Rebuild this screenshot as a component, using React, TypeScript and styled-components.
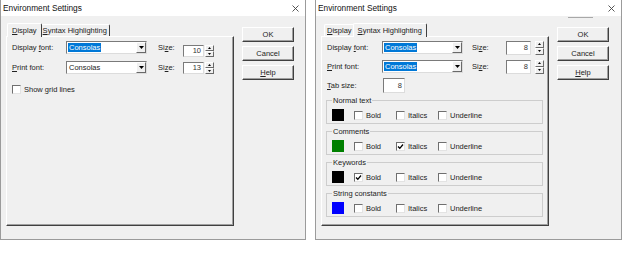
import React from 'react';
import styled, {createGlobalStyle} from 'styled-components';

type SizeLayout = {
    fontLabel: number;
    gap: number;
    sizeLabel: number;
    boxWidth: number;
    boxHeight: number;
    spinGap: number;
};

const LEFT_LAYOUT: SizeLayout = {fontLabel: 54, gap: 11, sizeLabel: 25, boxWidth: 21, boxHeight: 12, spinGap: 1};
const RIGHT_LAYOUT: SizeLayout = {fontLabel: 55, gap: 9, sizeLabel: 34, boxWidth: 25, boxHeight: 14, spinGap: 4};

const styleGroups = [
    {name: 'Normal text', color: '#000000', bold: false, italics: false},
    {name: 'Comments', color: '#008000', bold: false, italics: true},
    {name: 'Keywords', color: '#000000', bold: true, italics: false},
    {name: 'String constants', color: '#0000ff', bold: false, italics: false},
];

const GlobalStyle = createGlobalStyle`
    html, body {
        margin: 0;
        padding: 0;
        background: #fff;
    }
    body {
        font-family: 'Liberation Sans', Arial, sans-serif;
        font-size: 7.5px;
        line-height: 9px;
        color: #222;
    }
    u {
        text-decoration-thickness: 1px;
        text-underline-offset: 1px;
    }
`;

const Desk = styled.div`
    display: flex;
    align-items: flex-start;
    gap: 9px;
    width: 640px;
    height: 254px;
`;

const Frame = styled.div<{$width: number}>`
    display: flex;
    flex-direction: column;
    width: ${(p) => p.$width}px;
    height: 240px;
    box-sizing: border-box;
    border: 1px solid #9b9b9b;
    border-top: none;
    background: #f0f0f0;
`;

const TitleBar = styled.div`
    position: relative;
    display: flex;
    align-items: center;
    justify-content: space-between;
    height: 16px;
    padding-left: 2px;
    background: #fff;
`;

const TitleText = styled.span`
    font-size: 8.3px;
    line-height: 10px;
    color: #111;
`;

const CloseBox = styled.span`
    display: flex;
    align-items: center;
    justify-content: center;
    width: 20px;
    height: 16px;
`;

const TitleSliver = styled.span`
    position: absolute;
    left: 252px;
    bottom: -2px;
    width: 25px;
    height: 1px;
    background: #a8a8a8;
`;

const Body = styled.div`
    display: flex;
    flex: 1;
    padding: 8px 0 0 5px;
`;

const TabArea = styled.div`
    display: flex;
    flex-direction: column;
    width: 228px;
`;

const TabStrip = styled.div`
    position: relative;
    z-index: 1;
    display: flex;
    align-items: flex-end;
    height: 12px;
    padding-left: 3px;
`;

const Tab = styled.div<{$active?: boolean}>`
    position: relative;
    z-index: ${(p) => (p.$active ? 1 : 0)};
    display: flex;
    align-items: center;
    box-sizing: border-box;
    height: ${(p) => (p.$active ? 14 : 12)}px;
    margin: ${(p) => (p.$active ? '0 -2px -1px' : '0')};
    padding: 0 ${(p) => (p.$active ? 4 : 2)}px ${(p) => (p.$active ? 1 : 0)}px;
    border: 1px solid #fff;
    border-bottom: none;
    border-right-color: #404040;
    border-radius: 2px 2px 0 0;
    background: #f0f0f0;
    white-space: nowrap;
`;

const Panel = styled.div`
    display: flex;
    flex-direction: column;
    height: 190px;
    box-sizing: border-box;
    padding: 4px 0 0 5px;
    border: 1px solid;
    border-color: #fff #404040 #404040 #fff;
    box-shadow: inset -1px -1px 0 #a0a0a0;
`;

const ButtonColumn = styled.div`
    display: flex;
    flex-direction: column;
    gap: 4px;
    margin: 3px 0 0 8px;
`;

const PushButton = styled.button`
    width: 52px;
    height: 15px;
    padding: 0;
    box-sizing: border-box;
    font: inherit;
    color: #222;
    background: #f0f0f0;
    border: 1px solid;
    border-color: #fff #404040 #404040 #fff;
    box-shadow: inset -1px -1px 0 #a0a0a0;
`;

const FieldRow = styled.div<{$top: number; $height?: number}>`
    display: flex;
    align-items: center;
    height: ${(p) => p.$height ?? 13}px;
    margin-top: ${(p) => p.$top}px;
`;

const FieldLabel = styled.span<{$width: number; $gap?: number}>`
    flex: none;
    width: ${(p) => p.$width}px;
    margin-left: ${(p) => p.$gap ?? 0}px;
    white-space: nowrap;
`;

const Combo = styled.div`
    display: flex;
    align-items: center;
    width: 81px;
    height: 13px;
    box-sizing: border-box;
    padding-left: 1px;
    border: 1px solid;
    border-color: #7a7a7a #dcdcdc #dcdcdc #7a7a7a;
    background: #fff;
`;

const ComboValue = styled.span<{$selected?: boolean}>`
    padding: 0 1px;
    color: ${(p) => (p.$selected ? '#fff' : '#222')};
    background: ${(p) => (p.$selected ? '#0078d7' : 'transparent')};
`;

const DropButton = styled.span`
    display: flex;
    align-items: center;
    justify-content: center;
    width: 10px;
    height: 11px;
    margin-left: auto;
    box-sizing: border-box;
    border: 1px solid;
    border-color: #fff #696969 #696969 #fff;
    background: #f0f0f0;
`;

const SpinField = styled.span<{$drop: number}>`
    display: flex;
    align-items: center;
    margin-top: ${(p) => p.$drop * 2}px;
`;

const NumberBox = styled.span<{$width: number; $height: number}>`
    display: flex;
    align-items: center;
    justify-content: flex-end;
    width: ${(p) => p.$width}px;
    height: ${(p) => p.$height}px;
    box-sizing: border-box;
    padding-right: 2px;
    border: 1px solid;
    border-color: #7a7a7a #dcdcdc #dcdcdc #7a7a7a;
    background: #fff;
    color: #333;
`;

const Spinner = styled.span<{$gap: number; $height: number}>`
    display: flex;
    flex-direction: column;
    width: 9px;
    height: ${(p) => p.$height}px;
    margin-left: ${(p) => p.$gap}px;
`;

const SpinHalf = styled.span`
    display: flex;
    flex: 1;
    align-items: center;
    justify-content: center;
    box-sizing: border-box;
    border: 1px solid;
    border-color: #fff #696969 #696969 #fff;
    background: #f0f0f0;
`;

const CheckItem = styled.span<{$width?: number}>`
    display: flex;
    flex: none;
    align-items: center;
    gap: 3px;
    width: ${(p) => (p.$width ? `${p.$width}px` : 'auto')};
    white-space: nowrap;
`;

const CheckBox = styled.span`
    display: flex;
    align-items: center;
    justify-content: center;
    width: 9px;
    height: 9px;
    box-sizing: border-box;
    border: 1px solid;
    border-color: #6f6f6f #e3e3e3 #e3e3e3 #6f6f6f;
    background: #fff;
`;

const GroupList = styled.div`
    display: flex;
    flex-direction: column;
    gap: 3px;
    width: 217px;
    margin: 3px 0 0 -1px;
`;

const Group = styled.fieldset`
    margin: 0;
    padding: 4px 5px 2px;
    min-inline-size: 0;
    border: 1px solid #cdcdcd;
`;

const GroupLegend = styled.legend`
    padding: 0 1px;
    line-height: 9px;
`;

const GroupRow = styled.div`
    display: flex;
    align-items: center;
    height: 12px;
`;

const Swatch = styled.span<{$color: string}>`
    flex: none;
    width: 12px;
    height: 12px;
    margin-right: 10px;
    background: ${(p) => p.$color};
`;

const Tick = () => (
    <svg width='7' height='7' viewBox='0 0 7 7'>
        <path d='M1 3.5 L2.8 5.3 L6 1.5' fill='none' stroke='#000' strokeWidth='1.3'/>
    </svg>
);

const Check = ({checked, width, children}: {checked?: boolean; width?: number; children: React.ReactNode}) => (
    <CheckItem $width={width}>
        <CheckBox>{checked && <Tick/>}</CheckBox>
        <span>{children}</span>
    </CheckItem>
);

type FontRowProps = {
    label: React.ReactNode;
    size: string;
    selected?: boolean;
    layout: SizeLayout;
    top: number;
    drop?: number;
};

const FontRow = ({label, size, selected, layout, top, drop = 0}: FontRowProps) => (
    <FieldRow $top={top}>
        <FieldLabel $width={layout.fontLabel}>{label}</FieldLabel>
        <Combo>
            <ComboValue $selected={selected}>Consolas</ComboValue>
            <DropButton>
                <svg width='5' height='3' viewBox='0 0 5 3'>
                    <path d='M0 0 H5 L2.5 3 Z' fill='#000'/>
                </svg>
            </DropButton>
        </Combo>
        <FieldLabel
            $width={layout.sizeLabel}
            $gap={layout.gap}
        >
            {'Si'}<u>{'z'}</u>{'e:'}
        </FieldLabel>
        <SpinField $drop={drop}>
            <NumberBox
                $width={layout.boxWidth}
                $height={layout.boxHeight}
            >
                {size}
            </NumberBox>
            <Spinner
                $gap={layout.spinGap}
                $height={layout.boxHeight}
            >
                <SpinHalf>
                    <svg width='3' height='2' viewBox='0 0 3 2'><path d='M1.5 0 L3 2 H0 Z' fill='#000'/></svg>
                </SpinHalf>
                <SpinHalf>
                    <svg width='3' height='2' viewBox='0 0 3 2'><path d='M0 0 H3 L1.5 2 Z' fill='#000'/></svg>
                </SpinHalf>
            </Spinner>
        </SpinField>
    </FieldRow>
);

type DialogProps = {
    width: number;
    active: 'display' | 'syntax';
    sliver?: boolean;
    children: React.ReactNode;
};

const SettingsDialog = ({width, active, sliver, children}: DialogProps) => (
    <Frame $width={width}>
        <TitleBar>
            <TitleText>{'Environment Settings'}</TitleText>
            <CloseBox>
                <svg width='7' height='7' viewBox='0 0 7 7'>
                    <path d='M0.5 0.5 L6.5 6.5 M6.5 0.5 L0.5 6.5' stroke='#444' strokeWidth='0.9'/>
                </svg>
            </CloseBox>
            {sliver && <TitleSliver/>}
        </TitleBar>
        <Body>
            <TabArea>
                <TabStrip>
                    <Tab $active={active === 'display'}><u>{'D'}</u>{'isplay'}</Tab>
                    <Tab $active={active === 'syntax'}><u>{'S'}</u>{'yntax Highlighting'}</Tab>
                </TabStrip>
                <Panel>{children}</Panel>
            </TabArea>
            <ButtonColumn>
                <PushButton>{'OK'}</PushButton>
                <PushButton>{'Cancel'}</PushButton>
                <PushButton><u>{'H'}</u>{'elp'}</PushButton>
            </ButtonColumn>
        </Body>
    </Frame>
);

const App = () => (
    <>
        <GlobalStyle/>
        <Desk>
            <SettingsDialog
                width={306}
                active='display'
            >
                <FontRow
                    label={<>{'Display '}<u>{'f'}</u>{'ont:'}</>}
                    size='10'
                    selected={true}
                    layout={LEFT_LAYOUT}
                    top={0}
                    drop={3}
                />
                <FontRow
                    label={<><u>{'P'}</u>{'rint font:'}</>}
                    size='13'
                    layout={LEFT_LAYOUT}
                    top={7}
                />
                <FieldRow
                    $top={10}
                    $height={10}
                >
                    <Check>{'Show '}<u>{'g'}</u>{'rid lines'}</Check>
                </FieldRow>
            </SettingsDialog>
            <SettingsDialog
                width={307}
                active='syntax'
                sliver={true}
            >
                <FontRow
                    label={<>{'Display '}<u>{'f'}</u>{'ont:'}</>}
                    size='8'
                    selected={true}
                    layout={RIGHT_LAYOUT}
                    top={0}
                />
                <FontRow
                    label={<><u>{'P'}</u>{'rint font:'}</>}
                    size='8'
                    selected={true}
                    layout={RIGHT_LAYOUT}
                    top={6}
                />
                <FieldRow
                    $top={5}
                    $height={15}
                >
                    <FieldLabel $width={56}><u>{'T'}</u>{'ab size:'}</FieldLabel>
                    <NumberBox
                        $width={22}
                        $height={15}
                    >
                        {'8'}
                    </NumberBox>
                </FieldRow>
                <GroupList>
                    {styleGroups.map((group) => (
                        <Group key={group.name}>
                            <GroupLegend>{group.name}</GroupLegend>
                            <GroupRow>
                                <Swatch $color={group.color}/>
                                <Check
                                    checked={group.bold}
                                    width={42}
                                >
                                    {'Bold'}
                                </Check>
                                <Check
                                    checked={group.italics}
                                    width={42}
                                >
                                    {'Italics'}
                                </Check>
                                <Check>{'Underline'}</Check>
                            </GroupRow>
                        </Group>
                    ))}
                </GroupList>
            </SettingsDialog>
        </Desk>
    </>
);

export default App;
